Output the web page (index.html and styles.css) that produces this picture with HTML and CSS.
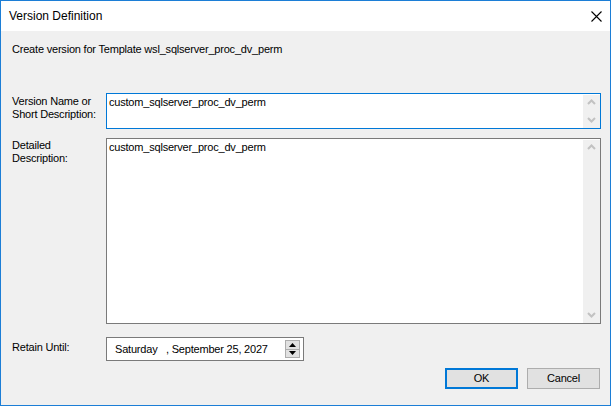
FILE: index.html
```html
<!DOCTYPE html>
<html>
<head>
<meta charset="utf-8">
<title>Version Definition</title>
<link rel="stylesheet" href="styles.css">
</head>
<body>
<div class="window">
  <div class="titlebar">
    <span class="title">Version Definition</span>
    <svg class="close" width="11" height="11" viewBox="0 0 11 11"><path d="M0.5 0.5 L10.5 10.5 M10.5 0.5 L0.5 10.5" stroke="#000" stroke-width="1.1" fill="none"/></svg>
  </div>
  <div class="body">
    <div class="intro">Create version for Template wsl_sqlserver_proc_dv_perm</div>
    <div class="form">
      <div class="label l1">Version Name or<br>Short Description:</div>
      <div class="textbox focused short">
        <div class="text">custom_sqlserver_proc_dv_perm</div>
        <div class="scrollbar">
          <svg width="17" height="10" viewBox="0 0 17 10"><path d="M5 7 L8.5 3.5 L12 7" stroke="#c2c2c2" stroke-width="2" fill="none"/></svg>
          <svg width="17" height="10" viewBox="0 0 17 10"><path d="M5 3 L8.5 6.5 L12 3" stroke="#c2c2c2" stroke-width="2" fill="none"/></svg>
        </div>
      </div>
      <div class="label l2">Detailed<br>Description:</div>
      <div class="textbox tall">
        <div class="text">custom_sqlserver_proc_dv_perm</div>
        <div class="scrollbar">
          <svg width="17" height="10" viewBox="0 0 17 10"><path d="M5 7 L8.5 3.5 L12 7" stroke="#c2c2c2" stroke-width="2" fill="none"/></svg>
          <svg width="17" height="10" viewBox="0 0 17 10"><path d="M5 3 L8.5 6.5 L12 3" stroke="#c2c2c2" stroke-width="2" fill="none"/></svg>
        </div>
      </div>
      <div class="label l3">Retain Until:</div>
      <div class="datebox">
        <div class="datetext">Saturday&nbsp;&nbsp;&nbsp;, September 25, 2027</div>
        <div class="spinner">
          <div class="spin"><svg width="7" height="4" viewBox="0 0 7 4"><path d="M0 4 L3.5 0 L7 4 Z" fill="#000"/></svg></div>
          <div class="spin"><svg width="7" height="4" viewBox="0 0 7 4"><path d="M0 0 L3.5 4 L7 0 Z" fill="#000"/></svg></div>
        </div>
      </div>
    </div>
    <div class="buttons">
      <div class="btn default">OK</div>
      <div class="btn">Cancel</div>
    </div>
  </div>
</div>
</body>
</html>
```

FILE: styles.css
```css
html, body {
  margin: 0;
  padding: 0;
}
body {
  width: 611px;
  height: 406px;
  overflow: hidden;
  font-family: "Liberation Sans", Arial, sans-serif;
  font-size: 11px;
  line-height: 13px;
  letter-spacing: -0.2px;
  color: #000;
}
.window {
  box-sizing: border-box;
  width: 611px;
  height: 406px;
  border: 1px solid #1c7ed6;
  display: flex;
  flex-direction: column;
  background: #f0f0f0;
}
.titlebar {
  height: 30px;
  background: #fff;
  display: flex;
  align-items: center;
  justify-content: space-between;
  padding: 0 8px 0 8px;
  flex: none;
}
.title {
  font-size: 12px;
  letter-spacing: 0;
  color: #000;
  margin-top: 1px;
}
.close {
  display: block;
}
.body {
  flex: 1;
  padding: 12px 9px 0 11px;
}
.intro {
  height: 13px;
}
.form {
  margin-top: 37px;
  display: grid;
  grid-template-columns: 94px 495px;
  grid-template-rows: 36px 186px 24px;
  row-gap: 9px;
}
.form .label.l1 { padding-top: 2px; }
.form .label.l2 { padding-top: 1px; }
.form .label.l3 { padding-top: 4px; margin-top: 4px; }
.textbox {
  box-sizing: border-box;
  background: #fff;
  border: 1px solid #7a7a7a;
  display: flex;
}
.textbox.focused {
  border-color: #0078d7;
}
.textbox .text {
  flex: 1;
  padding: 2px 0 0 2px;
}
.scrollbar {
  width: 17px;
  margin-top: 1px;
  background: #f0f0f0;
  display: flex;
  flex-direction: column;
  justify-content: space-between;
  padding: 2px 0 3px 0;
}
.scrollbar svg {
  display: block;
}
.datebox {
  box-sizing: border-box;
  margin-top: 4px;
  width: 198px;
  height: 24px;
  background: #fff;
  border: 1px solid #7a7a7a;
  display: flex;
  align-items: center;
  padding: 0 3px 0 8px;
}
.datetext {
  flex: 1;
  padding-top: 1px;
}
.spinner {
  width: 15px;
  height: 18px;
  display: flex;
  flex-direction: column;
}
.spin {
  box-sizing: border-box;
  flex: 1;
  background: #e1e1e1;
  border: 1px solid #adadad;
  display: flex;
  align-items: center;
  justify-content: center;
}
.spin + .spin {
  border-top: none;
}
.buttons {
  margin-top: 11px;
  display: flex;
  justify-content: flex-end;
  gap: 9px;
  padding-right: 1px;
}
.btn {
  box-sizing: border-box;
  width: 73px;
  height: 21px;
  background: #e1e1e1;
  border: 1px solid #adadad;
  display: flex;
  align-items: center;
  justify-content: center;
}
.btn.default {
  border: 2px solid #0078d7;
}
```
